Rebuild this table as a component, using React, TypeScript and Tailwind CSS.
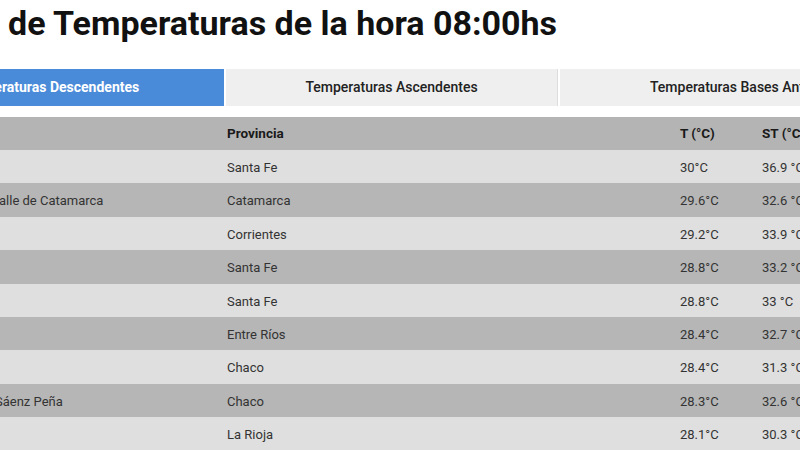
import React from "react";

const rows: { name: string; off: string; prov: string; t: string; st: string }[] = [
  { name: "", off: "", prov: "Santa Fe", t: "30°C", st: "36.9 °C" },
  { name: "Valle de Catamarca", off: "-ml-[9px]", prov: "Catamarca", t: "29.6°C", st: "32.6 °C" },
  { name: "", off: "", prov: "Corrientes", t: "29.2°C", st: "33.9 °C" },
  { name: "", off: "", prov: "Santa Fe", t: "28.8°C", st: "33.2 °C" },
  { name: "", off: "", prov: "Santa Fe", t: "28.8°C", st: "33 °C" },
  { name: "", off: "", prov: "Entre Ríos", t: "28.4°C", st: "32.7 °C" },
  { name: "", off: "", prov: "Chaco", t: "28.4°C", st: "31.3 °C" },
  { name: "Sáenz Peña", off: "-ml-[5px]", prov: "Chaco", t: "28.3°C", st: "32.6 °C" },
  { name: "", off: "", prov: "La Rioja", t: "28.1°C", st: "30.3 °C" },
];

export default function App() {
  return (
    <div className="w-[800px] h-[450px] overflow-hidden bg-white font-['Roboto',sans-serif]">
      <h1 className="pl-[8px] pt-[7px] text-[34px] leading-[33px] font-bold text-[#111] whitespace-nowrap">
        de Temperaturas de la hora 08:00hs
      </h1>
      <div className="mt-[29px] -ml-[126px] flex gap-[2px] h-[37px] whitespace-nowrap">
        <div className="w-[350px] shrink-0 bg-[#4a8bd9] text-white font-bold text-[14px] flex items-center justify-center">
          Temperaturas Descendentes
        </div>
        <div className="w-[332px] shrink-0 bg-[#efefef] border-r border-[#dddddd] text-[#222] font-medium text-[14px] flex items-center justify-center">
          Temperaturas Ascendentes
        </div>
        <div className="w-[377px] shrink-0 bg-[#efefef] text-[#222] font-medium text-[14px] flex items-center justify-center">
          Temperaturas Bases Antárticas
        </div>
      </div>
      <div className="mt-[11px] text-[13px] whitespace-nowrap">
        <div className="grid grid-cols-[215px_453px_82px_1fr] h-[33px] items-center bg-[#b4b4b4] font-bold text-[#1a1a1a] text-[13.5px]">
          <div />
          <div className="pl-[12px]">Provincia</div>
          <div className="pl-[12px]">T (°C)</div>
          <div className="pl-[12px]">ST (°C)</div>
        </div>
        {rows.map((r, i) => (
          <div
            key={i}
            className={
              "grid grid-cols-[215px_453px_82px_1fr] h-[33.4px] items-center pt-[2px] text-[#333] " +
              (i % 2 === 0 ? "bg-[#dfdfdf]" : "bg-[#b6b6b6]")
            }
          >
            <div className="overflow-hidden">
              <span className={"block " + r.off}>{r.name}</span>
            </div>
            <div className="pl-[12px]">{r.prov}</div>
            <div className="pl-[12px]">{r.t}</div>
            <div className="pl-[12px]">{r.st}</div>
          </div>
        ))}
      </div>
    </div>
  );
}
